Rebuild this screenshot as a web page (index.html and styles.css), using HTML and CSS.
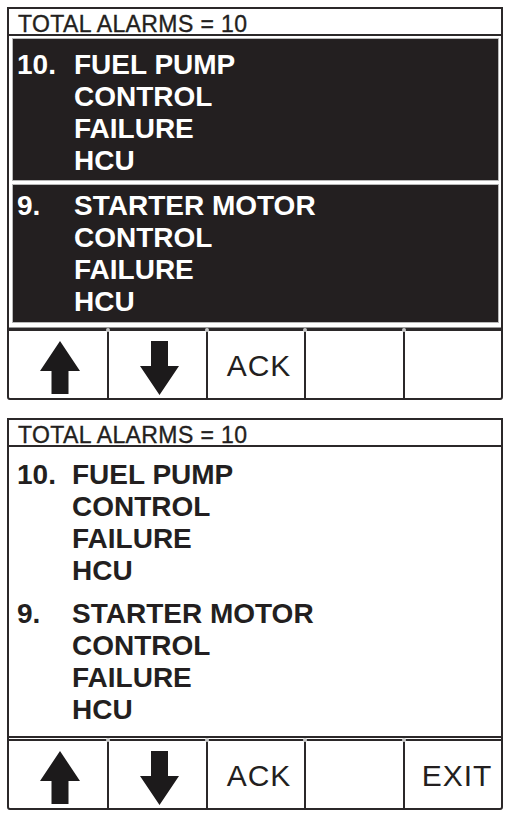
FILE: index.html
```html
<!DOCTYPE html>
<html>
<head>
<meta charset="utf-8">
<title>Alarms</title>
<link rel="stylesheet" href="styles.css">
</head>
<body>
<div class="page">
  <div class="screen">
    <div class="header">TOTAL ALARMS = 10</div>
    <div class="list list-dark">
      <div class="alarm alarm-first">
        <span class="num">10.</span>
        <div class="lines"><span>FUEL PUMP</span><span>CONTROL</span><span>FAILURE</span><span>HCU</span></div>
      </div>
      <div class="alarm alarm-second">
        <span class="num">9.</span>
        <div class="lines"><span>STARTER MOTOR</span><span>CONTROL</span><span>FAILURE</span><span>HCU</span></div>
      </div>
    </div>
    <div class="sep sep-single"></div>
    <div class="keys">
      <div class="key key-arrow">
        <svg class="arrow" width="40" height="53" viewBox="0 0 40 53"><polygon points="20,0 40,30 28.5,30 28.5,53 11.5,53 11.5,30 0,30" fill="#1c1a1b"/></svg>
      </div>
      <div class="key key-arrow">
        <svg class="arrow" width="39" height="54" viewBox="0 0 39 54"><polygon points="11,0 28,0 28,25 39,25 19.5,54 0,25 11,25" fill="#1c1a1b"/></svg>
      </div>
      <div class="key key-label">ACK</div>
      <div class="key key-label"></div>
      <div class="key key-label"></div>
    </div>
  </div>

  <div class="screen">
    <div class="header">TOTAL ALARMS = 10</div>
    <div class="list list-light">
      <div class="alarm">
        <span class="num">10.</span>
        <div class="lines"><span>FUEL PUMP</span><span>CONTROL</span><span>FAILURE</span><span>HCU</span></div>
      </div>
      <div class="alarm">
        <span class="num">9.</span>
        <div class="lines"><span>STARTER MOTOR</span><span>CONTROL</span><span>FAILURE</span><span>HCU</span></div>
      </div>
    </div>
    <div class="sep sep-double"></div>
    <div class="keys">
      <div class="key key-arrow">
        <svg class="arrow" width="40" height="53" viewBox="0 0 40 53"><polygon points="20,0 40,30 28.5,30 28.5,53 11.5,53 11.5,30 0,30" fill="#1c1a1b"/></svg>
      </div>
      <div class="key key-arrow">
        <svg class="arrow" width="39" height="54" viewBox="0 0 39 54"><polygon points="11,0 28,0 28,25 39,25 19.5,54 0,25 11,25" fill="#1c1a1b"/></svg>
      </div>
      <div class="key key-label">ACK</div>
      <div class="key key-label"></div>
      <div class="key key-label key-exit">EXIT</div>
    </div>
  </div>
</div>
</body>
</html>
```

FILE: styles.css
```css
html, body {
  margin: 0;
  padding: 0;
  background: #ffffff;
}

body {
  font-family: "Liberation Sans", Arial, Helvetica, sans-serif;
  color: #231f20;
}

.page {
  padding: 7px 3px 0 7px;
}

.screen {
  width: 496px;
  box-sizing: border-box;
  border: 2px solid #2b2829;
  border-radius: 0 0 3px 3px;
}

.screen + .screen {
  margin-top: 18px;
}

.header {
  height: 27px;
  box-sizing: border-box;
  padding: 3px 0 0 9px;
  font-size: 23px;
  line-height: 24px;
  letter-spacing: 0.4px;
  color: #231f20;
  -webkit-text-stroke: 0.35px #231f20;
  border-bottom: 2px solid #2b2829;
  white-space: nowrap;
}

.list {
  display: flex;
  flex-direction: column;
}

.list-dark {
  padding: 2px 2px 0 3px;
  gap: 3px;
}

.list-light {
  padding: 12px 0 10px 8px;
  gap: 11px;
}

.alarm {
  display: flex;
  font-weight: bold;
  font-size: 28px;
  line-height: 32px;
  white-space: nowrap;
}

.list-dark .alarm {
  background: #231f20;
  color: #ffffff;
  border: 1px solid #b8b8b8;
  padding-left: 4px;
}

.list-dark .alarm-first {
  padding-top: 10px;
  padding-bottom: 3px;
}

.list-dark .alarm-second {
  padding-top: 5px;
  padding-bottom: 4px;
}

.num {
  flex: none;
  width: 57px;
}

.list-light .num {
  width: 55px;
}

.lines {
  display: flex;
  flex-direction: column;
}

.sep-single {
  margin-top: 4px;
  height: 3px;
  background: #2b2829;
  border-top: 1px solid #9a9a9a;
}

.sep-double {
  border-top: 5px double #2b2829;
}

.keys {
  display: grid;
  grid-template-columns: 100px 99px 98px 99px 1fr;
  height: 67px;
}

.key {
  position: relative;
  box-sizing: border-box;
  min-width: 0;
  display: flex;
  align-items: center;
  justify-content: center;
  border-right: 2px solid #2b2829;
}

.key:last-child {
  border-right: none;
}

.key:not(:last-child)::after {
  content: "";
  position: absolute;
  top: -3px;
  right: -3px;
  width: 4px;
  height: 4px;
  border-radius: 50%;
  background: #c8c8c8;
}

.key-arrow {
  padding: 6px 0 0 3px;
}

.arrow {
  display: block;
}

.key-label {
  font-size: 30px;
  letter-spacing: 1px;
  color: #231f20;
  padding: 2px 0 0 6px;
}

.key-exit {
  padding-left: 8px;
}
```
